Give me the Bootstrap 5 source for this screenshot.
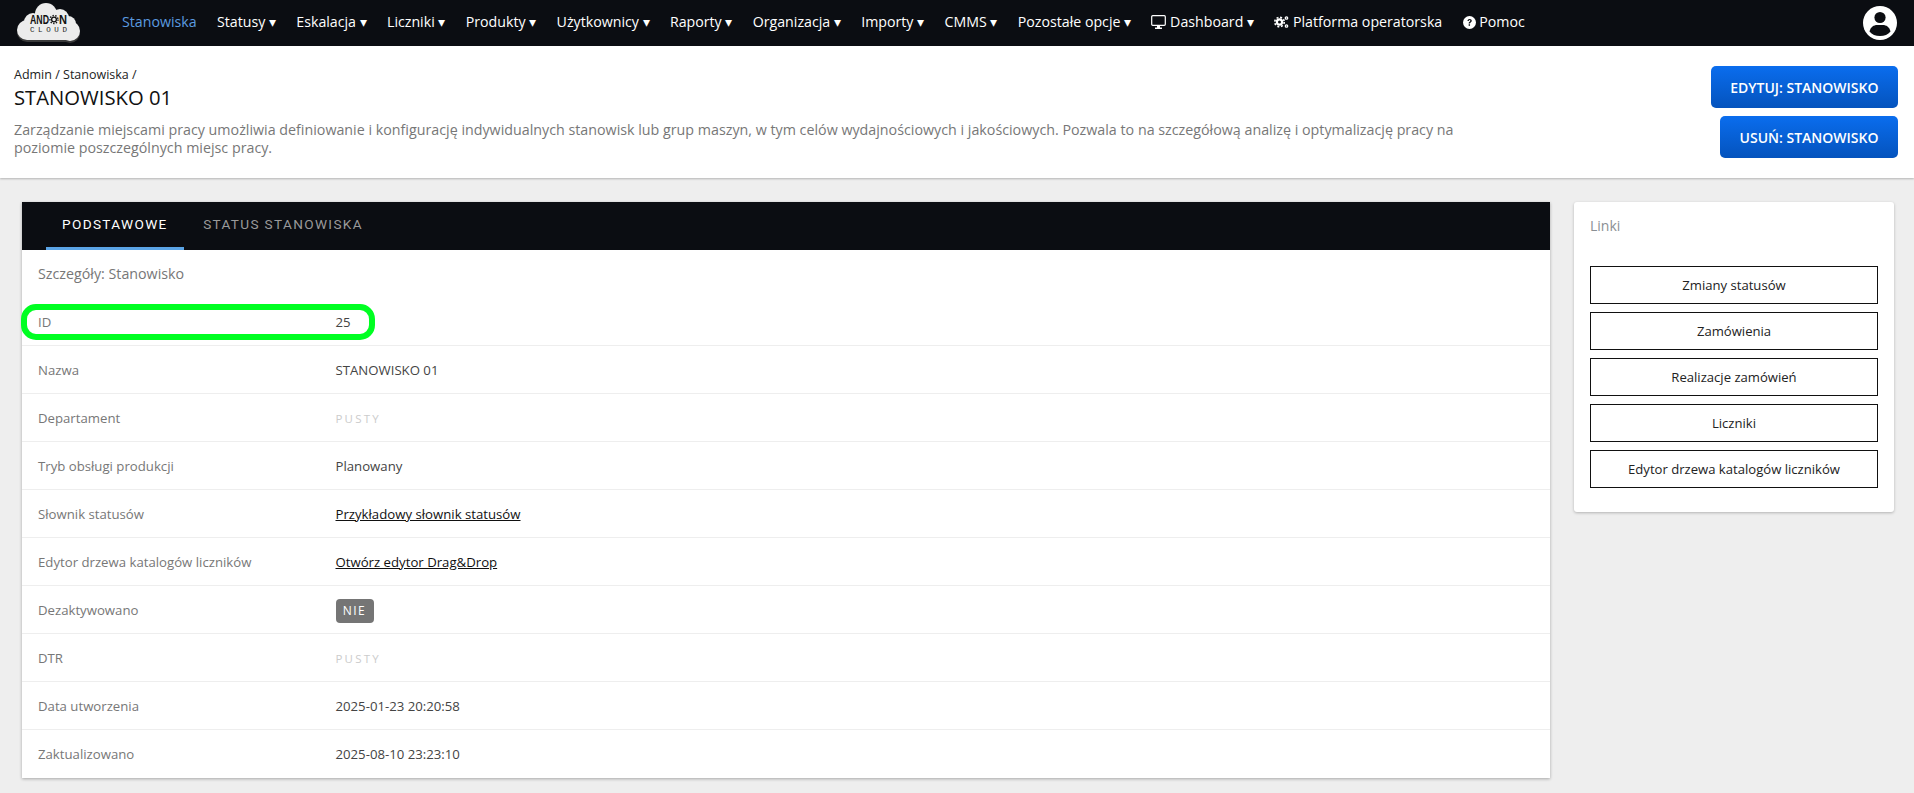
<!doctype html>
<html lang="pl">
<head>
<meta charset="utf-8">
<title>Stanowisko 01</title>
<link href="https://cdn.jsdelivr.net/npm/bootstrap@5.3.0/dist/css/bootstrap.min.css" rel="stylesheet">
<style>
body{background:#eee;font-family:"Open Sans","Liberation Sans",sans-serif;font-size:13.2px;color:#444;min-height:793px}
.top-bar{background:#0b0d12;height:46px;padding:0 16px 0 16px}
.top-bar .navbar-brand{padding:0;margin:0 40px 0 0;height:46px;display:flex;align-items:center}
.top-links .nav-link{color:#fff;font-size:14.2px;padding:0;margin-right:20.3px;line-height:44px;height:46px;white-space:nowrap}
.top-links .nav-link.active{color:#5b9be0}
.top-links svg{vertical-align:-2px}
.avatar-mark{margin-right:1px}
.head-block{background:#fff;height:132px;padding:20px 16px 0 14px;box-shadow:0 1px 2px rgba(0,0,0,.25)}
.crumbs{font-size:12.5px;color:#222;line-height:16px;margin-top:1px}
.head-title{font-size:20.25px;font-weight:400;color:#111;line-height:26px;margin:1px 0 0}
.head-desc{font-size:14.27px;line-height:18.5px;color:#777;margin:10.5px 0 0;width:1460px}
.head-btn{background:linear-gradient(#0a6dee,#0453bd);color:#fff;border:0;border-radius:5px;font-size:14px;font-weight:600;height:42px;padding:0 19.5px;white-space:nowrap}
.head-btn:hover{color:#fff}
.page-main{padding:24px 20px 15px 22px;gap:24px}
.main-panel{flex:1 1 auto;border:0;border-radius:0;box-shadow:0 1px 3px rgba(0,0,0,.3);position:relative}
.side-panel{flex:0 0 320px;align-self:flex-start;height:310px;border:0;border-radius:3px;box-shadow:0 1px 3px rgba(0,0,0,.25);padding:16px}
.tab-strip{background:#0b0d12;height:48px;padding-left:24px;border:0}
.tab-strip .nav-link{font-family:Roboto,"Liberation Sans",sans-serif;font-size:13.6px;letter-spacing:1.35px;color:#9a9a9a;padding:0 16px;line-height:45px;height:48px;border:0;border-radius:0;border-bottom:3px solid transparent;background:none;margin:0;white-space:nowrap}
.tab-strip .nav-link.active{color:#fff;background:none;border-bottom-color:#5ba4e6}
.tab-strip .nav-item+.nav-item .nav-link{padding-left:19.5px}
.sub-head{font-size:14.25px;color:#777;height:48px;padding:14px 16px 0;line-height:20px}
.info-row{display:flex;align-items:center;height:48px;padding:2px 16px 0;border-color:#eee;color:#444}
.info-label{flex:0 0 297.5px;color:#777}
.info-row a{color:#111}
.blank-val{font-size:11.5px;letter-spacing:2.2px;color:#ccc}
.no-chip{background:#757575;color:#fff;font-size:12px;font-weight:400;letter-spacing:1.4px;border-radius:4px;padding:0;width:38px;height:24px;line-height:24px}
.oval-mark{position:absolute;left:-1px;top:102px;width:354px;height:36px;border:6px solid #0f2;border-radius:15px;pointer-events:none}
.side-title{font-size:14px;color:#8a8f94;line-height:20px;margin:-2px 0 30px}
.side-btn{background:#fff;border:1px solid #111;border-radius:0;height:38px;font-size:13.1px;color:#222;line-height:36px;padding:0}
.side-btn:hover{background:#fff;color:#222;border-color:#111}
</style>
</head>
<body>
<nav class="navbar top-bar flex-nowrap">
  <a class="navbar-brand" href="#" aria-label="Andon Cloud">
    <svg width="66" height="44" viewBox="0 0 66 44">
      <defs>
        <g id="cloudshape">
          <circle cx="11" cy="29" r="10"/><circle cx="17" cy="21" r="9"/><circle cx="30" cy="13" r="11"/><circle cx="44" cy="17" r="9"/><circle cx="52" cy="23" r="8"/><circle cx="54" cy="30" r="10"/><rect x="11" y="20" width="43" height="19"/>
        </g>
      </defs>
      <use href="#cloudshape" fill="#3a3a3a" y="2"/>
      <use href="#cloudshape" fill="#ececec"/>
      <text x="14" y="23" font-family="Liberation Sans,sans-serif" font-size="12" font-weight="700" fill="#111" textLength="19" lengthAdjust="spacingAndGlyphs">AND</text>
      <circle cx="38" cy="18.500" r="2.400" fill="none" stroke="#111" stroke-width="1.300"/>
      <circle cx="38" cy="18.500" r="4" fill="none" stroke="#111" stroke-width="1.400" stroke-dasharray="1.400 1.400"/>
      <text x="43" y="23" font-family="Liberation Sans,sans-serif" font-size="12" font-weight="700" fill="#111" textLength="8" lengthAdjust="spacingAndGlyphs">N</text>
      <text x="14" y="31" font-family="Liberation Mono,monospace" font-size="7.500" fill="#222" textLength="37">CLOUD</text>
    </svg>
  </a>
  <ul class="navbar-nav flex-row top-links me-auto">
    <li class="nav-item"><a class="nav-link active" href="#">Stanowiska</a></li>
    <li class="nav-item"><a class="nav-link" href="#">Statusy ▾</a></li>
    <li class="nav-item"><a class="nav-link" href="#">Eskalacja ▾</a></li>
    <li class="nav-item"><a class="nav-link" href="#">Liczniki ▾</a></li>
    <li class="nav-item"><a class="nav-link" href="#">Produkty ▾</a></li>
    <li class="nav-item"><a class="nav-link" href="#">Użytkownicy ▾</a></li>
    <li class="nav-item"><a class="nav-link" href="#">Raporty ▾</a></li>
    <li class="nav-item"><a class="nav-link" href="#">Organizacja ▾</a></li>
    <li class="nav-item"><a class="nav-link" href="#">Importy ▾</a></li>
    <li class="nav-item"><a class="nav-link" href="#">CMMS ▾</a></li>
    <li class="nav-item"><a class="nav-link" href="#">Pozostałe opcje ▾</a></li>
    <li class="nav-item"><a class="nav-link" href="#"><svg width="15" height="14" viewBox="0 0 15 14"><rect x=".7" y=".7" width="13.600" height="9.600" rx="1" fill="none" stroke="#fff" stroke-width="1.200"/><path d="M6 11h3v1.500h2V14H4v-1.500h2z" fill="#fff"/></svg> Dashboard ▾</a></li>
    <li class="nav-item"><a class="nav-link" href="#"><svg width="15" height="14" viewBox="0 0 15 14"><circle cx="5.500" cy="7" r="2.600" fill="none" stroke="#fff" stroke-width="2.200"/><circle cx="5.500" cy="7" r="4.700" fill="none" stroke="#fff" stroke-width="1.600" stroke-dasharray="2 1.700"/><circle cx="12.500" cy="3" r="1.200" fill="none" stroke="#fff" stroke-width="1.300"/><circle cx="12.500" cy="11" r="1.200" fill="none" stroke="#fff" stroke-width="1.300"/></svg> Platforma operatorska</a></li>
    <li class="nav-item"><a class="nav-link" href="#"><svg width="13" height="13" viewBox="0 0 12 12"><circle cx="6" cy="6" r="6" fill="#fff"/><path d="M4.100 4.600C4.200 3.400 5 2.700 6.100 2.700c1.200 0 2 .7 2 1.700 0 .8-.5 1.200-1 1.500-.5.300-.6.500-.6 1H5.200c0-.9.300-1.300.9-1.700.4-.3.700-.5.700-.8s-.3-.6-.7-.6-.7.300-.8.800zM5.200 7.700h1.300V9H5.200z" fill="#0b0d12"/></svg> Pomoc</a></li>
  </ul>
  <svg class="avatar-mark" width="34" height="34" viewBox="0 0 34 34" role="img" aria-label="Konto">
    <circle cx="17" cy="17" r="17" fill="#fff"/>
    <circle cx="17" cy="11.500" r="5.600" fill="#0b0d12"/>
    <path d="M6.500 25.500c1-4.500 4.500-6.500 7.500-6.500h6c3 0 6.500 2 7.500 6.500C25 28.500 21.500 30 17 30s-8-1.500-10.500-4.500z" fill="#0b0d12"/>
  </svg>
</nav>

<header class="head-block d-flex justify-content-between">
  <div>
    <div class="crumbs">Admin / Stanowiska /</div>
    <h1 class="head-title">STANOWISKO 01</h1>
    <p class="head-desc">Zarządzanie miejscami pracy umożliwia definiowanie i konfigurację indywidualnych stanowisk lub grup maszyn, w tym celów wydajnościowych i jakościowych. Pozwala to na szczegółową analizę i optymalizację pracy na poziomie poszczególnych miejsc pracy.</p>
  </div>
  <div class="d-flex flex-column align-items-end gap-2 head-actions">
    <a class="btn head-btn d-flex align-items-center" href="#">EDYTUJ: STANOWISKO</a>
    <a class="btn head-btn d-flex align-items-center" href="#">USUŃ: STANOWISKO</a>
  </div>
</header>

<main class="d-flex page-main">
  <section class="card main-panel">
    <ul class="nav nav-tabs tab-strip flex-nowrap">
      <li class="nav-item"><a class="nav-link active" href="#">PODSTAWOWE</a></li>
      <li class="nav-item"><a class="nav-link" href="#">STATUS STANOWISKA</a></li>
    </ul>
    <div class="sub-head">Szczegóły: Stanowisko</div>
    <div class="list-group list-group-flush">
      <div class="list-group-item info-row"><span class="info-label">ID</span><span>25</span></div>
      <div class="list-group-item info-row"><span class="info-label">Nazwa</span><span>STANOWISKO 01</span></div>
      <div class="list-group-item info-row"><span class="info-label">Departament</span><span class="blank-val">PUSTY</span></div>
      <div class="list-group-item info-row"><span class="info-label">Tryb obsługi produkcji</span><span>Planowany</span></div>
      <div class="list-group-item info-row"><span class="info-label">Słownik statusów</span><a href="#">Przykładowy słownik statusów</a></div>
      <div class="list-group-item info-row"><span class="info-label">Edytor drzewa katalogów liczników</span><a href="#">Otwórz edytor Drag&amp;Drop</a></div>
      <div class="list-group-item info-row"><span class="info-label">Dezaktywowano</span><span class="badge no-chip">NIE</span></div>
      <div class="list-group-item info-row"><span class="info-label">DTR</span><span class="blank-val">PUSTY</span></div>
      <div class="list-group-item info-row"><span class="info-label">Data utworzenia</span><span>2025-01-23 20:20:58</span></div>
      <div class="list-group-item info-row"><span class="info-label">Zaktualizowano</span><span>2025-08-10 23:23:10</span></div>
    </div>
    <div class="oval-mark"></div>
  </section>
  <aside class="card side-panel">
    <div class="side-title">Linki</div>
    <div class="d-grid gap-2">
      <a class="btn side-btn" href="#">Zmiany statusów</a>
      <a class="btn side-btn" href="#">Zamówienia</a>
      <a class="btn side-btn" href="#">Realizacje zamówień</a>
      <a class="btn side-btn" href="#">Liczniki</a>
      <a class="btn side-btn" href="#">Edytor drzewa katalogów liczników</a>
    </div>
  </aside>
</main>
</body>
</html>
